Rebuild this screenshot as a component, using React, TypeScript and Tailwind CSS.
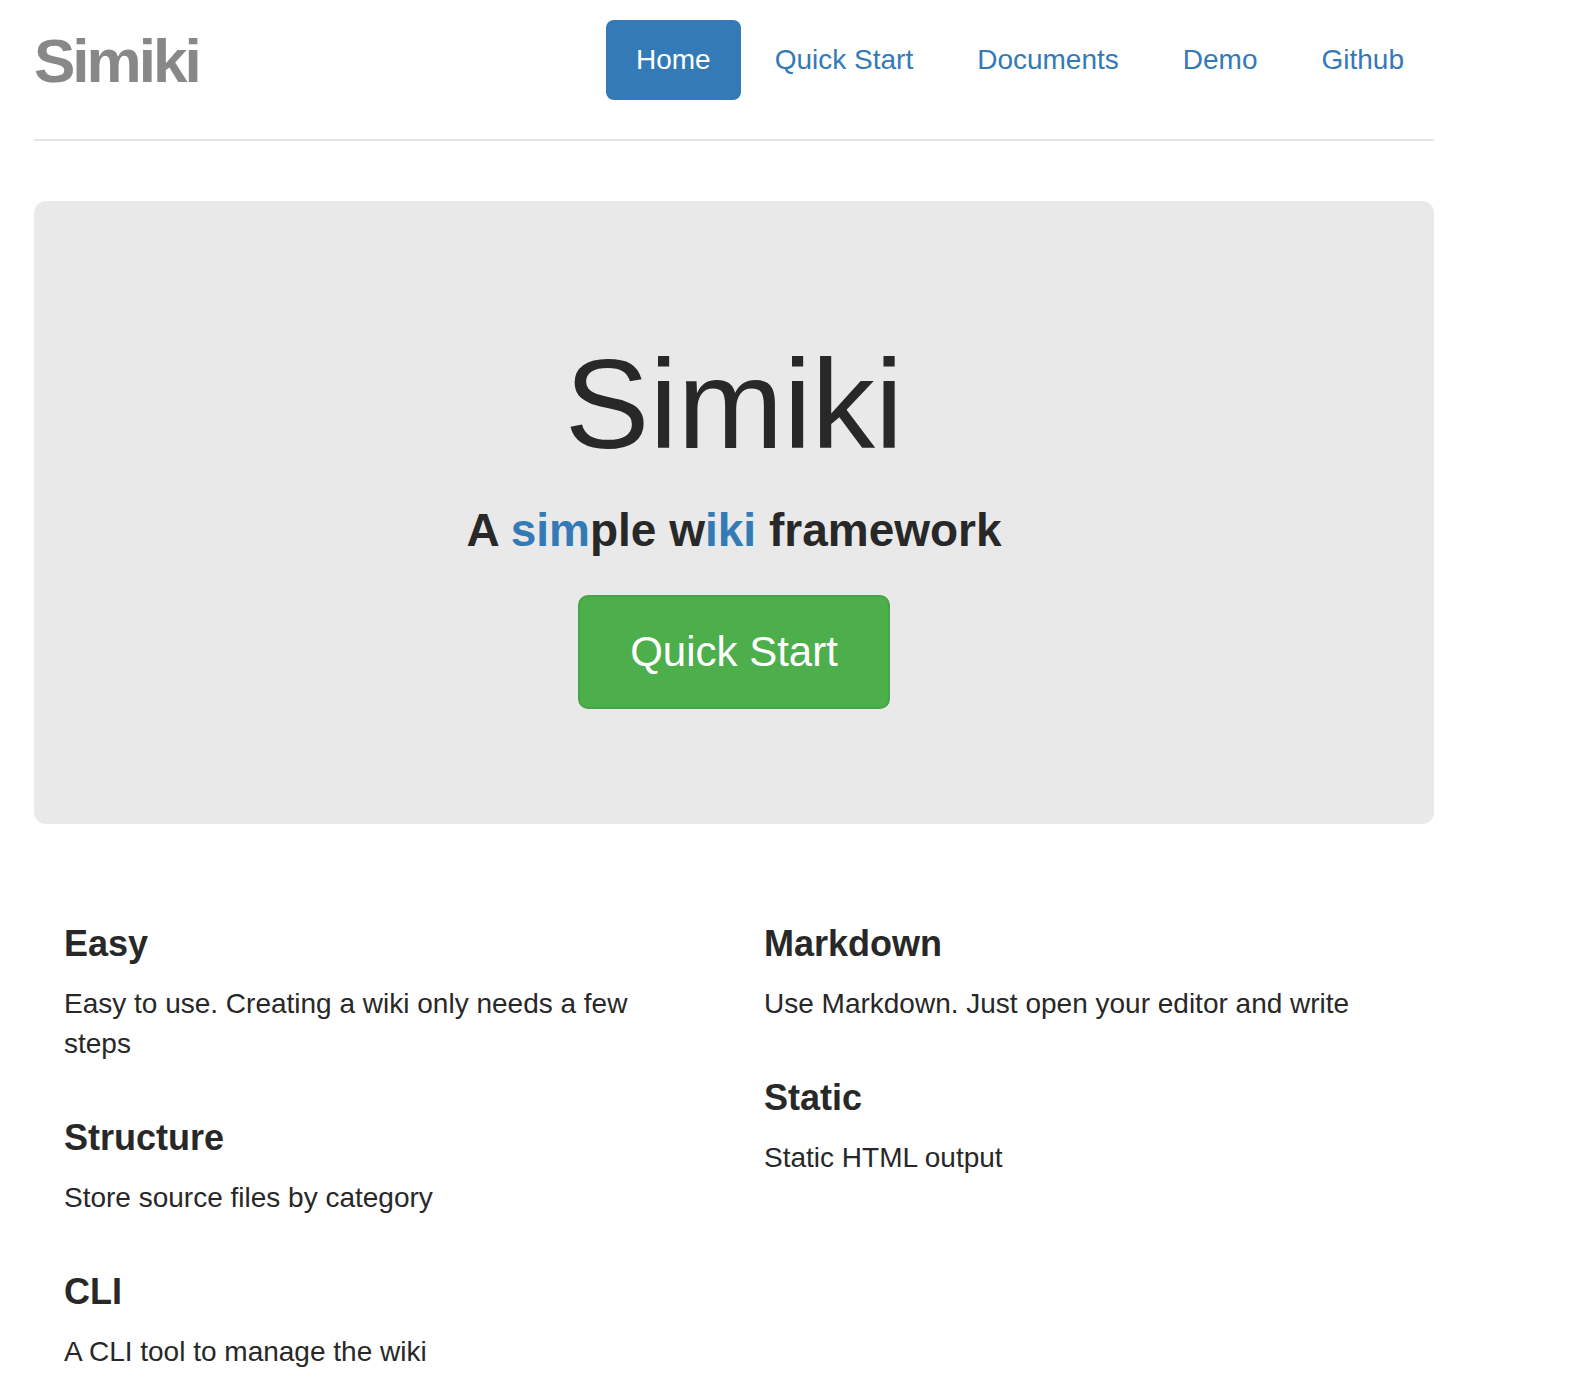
import React from "react";

const navItems = ["Home", "Quick Start", "Documents", "Demo", "Github"];

const leftFeatures = [
  { title: "Easy", text: "Easy to use. Creating a wiki only needs a few steps" },
  { title: "Structure", text: "Store source files by category" },
  { title: "CLI", text: "A CLI tool to manage the wiki" },
];

const rightFeatures = [
  { title: "Markdown", text: "Use Markdown. Just open your editor and write" },
  { title: "Static", text: "Static HTML output" },
];

/** feature column */
const FeatureList = ({ items }: { items: { title: string; text: string }[] }) => (
  <div className="pl-[30px] pr-[40px]">
    {items.map((f, i) => (
      <div key={f.title} className={i > 0 ? "mt-[54px]" : ""}>
        <h4 className="text-[36px] font-bold leading-[40px]">{f.title}</h4>
        <p className="mt-[20px] text-[28px] leading-[40px]">{f.text}</p>
      </div>
    ))}
  </div>
);

export default function App() {
  return (
    <div className="min-h-screen bg-white font-['Liberation_Sans',Arial,sans-serif] text-[#282828]">
      <div className="ml-[34px] w-[1400px] pt-[20px]">
        {/* header */}
        <div className="flex items-start justify-between border-b-2 border-[#e5e5e5] pb-[38px]">
          <h3 className="mt-[1px] text-[62px] font-bold leading-[80px] tracking-[-3px] text-[#888888]">
            Simiki
          </h3>
          <nav className="flex gap-[4px]">
            {navItems.map((item, i) => (
              <a
                key={item}
                href="#"
                className={
                  i === 0
                    ? "rounded-[8px] bg-[#337ab7] px-[30px] py-[20px] text-[28px] leading-[40px] text-white"
                    : "rounded-[8px] px-[30px] py-[20px] text-[28px] leading-[40px] text-[#337ab7]"
                }
              >
                {item}
              </a>
            ))}
          </nav>
        </div>

        {/* jumbotron */}
        <div className="mt-[60px] flex flex-col items-center rounded-[12px] bg-[#e9e9e9] pt-[133px] pb-[115px]">
          <h1 className="text-[127px] font-normal leading-[140px]">Simiki</h1>
          <p className="mt-[31px] text-[46px] font-bold leading-[51px]">
            A <span className="text-[#337ab7]">sim</span>ple w<span className="text-[#337ab7]">iki</span> framework
          </p>
          <a
            href="#"
            className="mt-[39px] rounded-[10px] border-2 border-[#46a546] bg-[#4dae4c] px-[50px] py-[27px] text-[42px] leading-[56px] text-white"
          >
            Quick Start
          </a>
        </div>

        {/* marketing */}
        <div className="mt-[100px] grid grid-cols-2">
          <FeatureList items={leftFeatures} />
          <FeatureList items={rightFeatures} />
        </div>
      </div>
    </div>
  );
}
